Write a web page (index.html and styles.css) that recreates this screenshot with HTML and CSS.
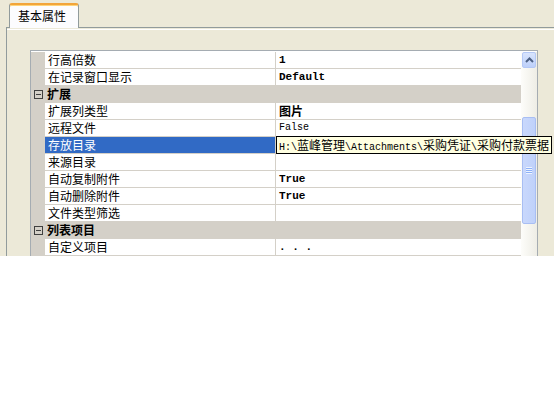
FILE: index.html
```html
<!DOCTYPE html>
<html lang="zh-CN">
<head>
    <meta charset="UTF-8">
    <title>基本属性</title>
    <link rel="stylesheet" href="styles.css">
</head>
<body>

<div class="window">
    <div class="tabs">
        <div class="tab">基本属性</div>
    </div>

    <div class="panel">
        <div class="grid">
            <div class="rows">
                <div class="row"><div class="gut"></div><div class="name">行高倍数</div><div class="val bold">1</div></div>
                <div class="row"><div class="gut"></div><div class="name">在记录窗口显示</div><div class="val bold">Default</div></div>
                <div class="row cat"><div class="gut"><span class="box"></span></div><div class="name">扩展</div></div>
                <div class="row"><div class="gut"></div><div class="name">扩展列类型</div><div class="val bold cjk">图片</div></div>
                <div class="row"><div class="gut"></div><div class="name">远程文件</div><div class="val">False</div></div>
                <div class="row selected"><div class="gut"></div><div class="name">存放目录</div><div class="val"></div></div>
                <div class="row"><div class="gut"></div><div class="name">来源目录</div><div class="val"></div></div>
                <div class="row"><div class="gut"></div><div class="name">自动复制附件</div><div class="val bold">True</div></div>
                <div class="row"><div class="gut"></div><div class="name">自动删除附件</div><div class="val bold">True</div></div>
                <div class="row"><div class="gut"></div><div class="name">文件类型筛选</div><div class="val"></div></div>
                <div class="row cat"><div class="gut"><span class="box"></span></div><div class="name">列表项目</div></div>
                <div class="row"><div class="gut"></div><div class="name">自定义项目</div><div class="val bold">. . .</div></div>
            </div>

            <div class="scrollbar">
                <div class="sb-btn">
                    <svg width="9" height="6" viewBox="0 0 9 6"><path d="M1 5 L4.5 1.5 L8 5" fill="none" stroke="#4d6185" stroke-width="2"/></svg>
                </div>
                <div class="sb-space"></div>
                <div class="sb-thumb">
                    <div class="grip"></div>
                </div>
            </div>

            <div class="tooltip"><span class="a">H:\</span>蓝峰管理<span class="a">\Attachments\</span>采购凭证<span class="a">\</span>采购付款票据</div>
        </div>
    </div>
</div>

</body>
</html>
```

FILE: styles.css
```css
body {
    margin: 0;
    padding: 0;
    background-color: white;
    font-family: "Noto Sans CJK SC", sans-serif;
    font-size: 12px;
    color: black;
}

.window {
    height: 256px;
    background-color: #ECE9D8;
    overflow: hidden;
    display: flex;
    flex-direction: column;
}

.tabs {
    display: flex;
    padding: 3px 0 0 9px;
    height: 27px;
    box-sizing: border-box;
}

.tab {
    width: 70px;
    box-sizing: border-box;
    background-color: #FCFCFE;
    border-top: 2px solid #F2A53A;
    border-left: 1px solid #919B9C;
    border-right: 1px solid #919B9C;
    border-radius: 3px 3px 0 0;
    padding: 3px 0 0 8px;
    line-height: 16px;
    position: relative;
    top: 0;
    height: 25px;
    box-shadow: inset 0 1px 0 #FFD47A;
}

.panel {
    flex: 1;
    margin-left: 6px;
    border-top: 1px solid #919B9C;
    border-left: 1px solid #919B9C;
    padding: 22px 0 0 23px;
    box-shadow: inset 0 1px 0 #ECE9D8, inset 0 2px 0 #FFFFFF;
}

.grid {
    position: relative;
    width: 508px;
    height: 210px;
    box-sizing: border-box;
    border: 1px solid #A5ACB2;
    border-bottom: none;
    background-color: white;
    display: flex;
    padding-top: 1px;
}

.rows {
    width: 490px;
    display: flex;
    flex-direction: column;
}

.row {
    display: flex;
    height: 17px;
    flex-shrink: 0;
}

.gut {
    width: 14px;
    background-color: #D4D0C8;
    flex-shrink: 0;
    display: flex;
    align-items: center;
    justify-content: center;
}

.name {
    width: 231px;
    box-sizing: border-box;
    border-bottom: 1px solid #D4D0C8;
    border-right: 1px solid #D4D0C8;
    padding-left: 3px;
    line-height: 16px;
    white-space: nowrap;
    flex-shrink: 0;
}

.val {
    flex: 1;
    border-bottom: 1px solid #D4D0C8;
    padding-left: 3px;
    font-family: "Liberation Mono", monospace;
    font-size: 10px;
    line-height: 16px;
    white-space: nowrap;
}

.val.bold {
    font-weight: bold;
    font-size: 11px;
}

.val.cjk {
    font-family: "Noto Sans CJK SC", sans-serif;
    font-size: 12px;
}

.row.cat .name {
    flex: 1;
    width: auto;
    background-color: #D4D0C8;
    border-right: none;
    font-weight: bold;
    padding-left: 2px;
}

.row.cat .gut {
    justify-content: flex-start;
    padding-left: 3px;
    box-sizing: border-box;
}

.box {
    width: 9px;
    height: 9px;
    box-sizing: border-box;
    border: 1px solid #404040;
    position: relative;
}

.box::after {
    content: "";
    position: absolute;
    left: 1px;
    top: 3px;
    width: 5px;
    height: 1px;
    background-color: #404040;
}

.row.selected .name {
    background-color: #316AC5;
    color: white;
}

.scrollbar {
    width: 16px;
    display: flex;
    flex-direction: column;
    background: linear-gradient(to right, #FDFDFA, #EEEDE5);
}

.sb-btn {
    height: 16px;
    box-sizing: border-box;
    margin: 0 1px;
    border: 1px solid #B4C8F6;
    border-radius: 2px;
    background: linear-gradient(to bottom, #D8E4FD, #BDD0FA);
    display: flex;
    align-items: center;
    justify-content: center;
}

.sb-space {
    height: 49px;
}

.sb-thumb {
    height: 107px;
    box-sizing: border-box;
    margin: 0 1px;
    border: 1px solid #A8BEF3;
    border-radius: 2px;
    background: linear-gradient(to right, #C9D8FC, #BFD1FA);
    display: flex;
    align-items: center;
    justify-content: center;
}

.grip {
    width: 6px;
    height: 7px;
    background: repeating-linear-gradient(to bottom, #EEF4FE 0, #EEF4FE 1px, #8CB0F8 1px, #8CB0F8 2px);
}

.tooltip {
    position: absolute;
    left: 245px;
    top: 85px;
    width: 276px;
    height: 18px;
    box-sizing: border-box;
    border: 1px solid black;
    background-color: #FFFFE1;
    padding-left: 2px;
    line-height: 16px;
    white-space: nowrap;
    font-size: 12px;
}

.tooltip .a {
    font-family: "Liberation Mono", monospace;
    font-size: 10px;
}
```
